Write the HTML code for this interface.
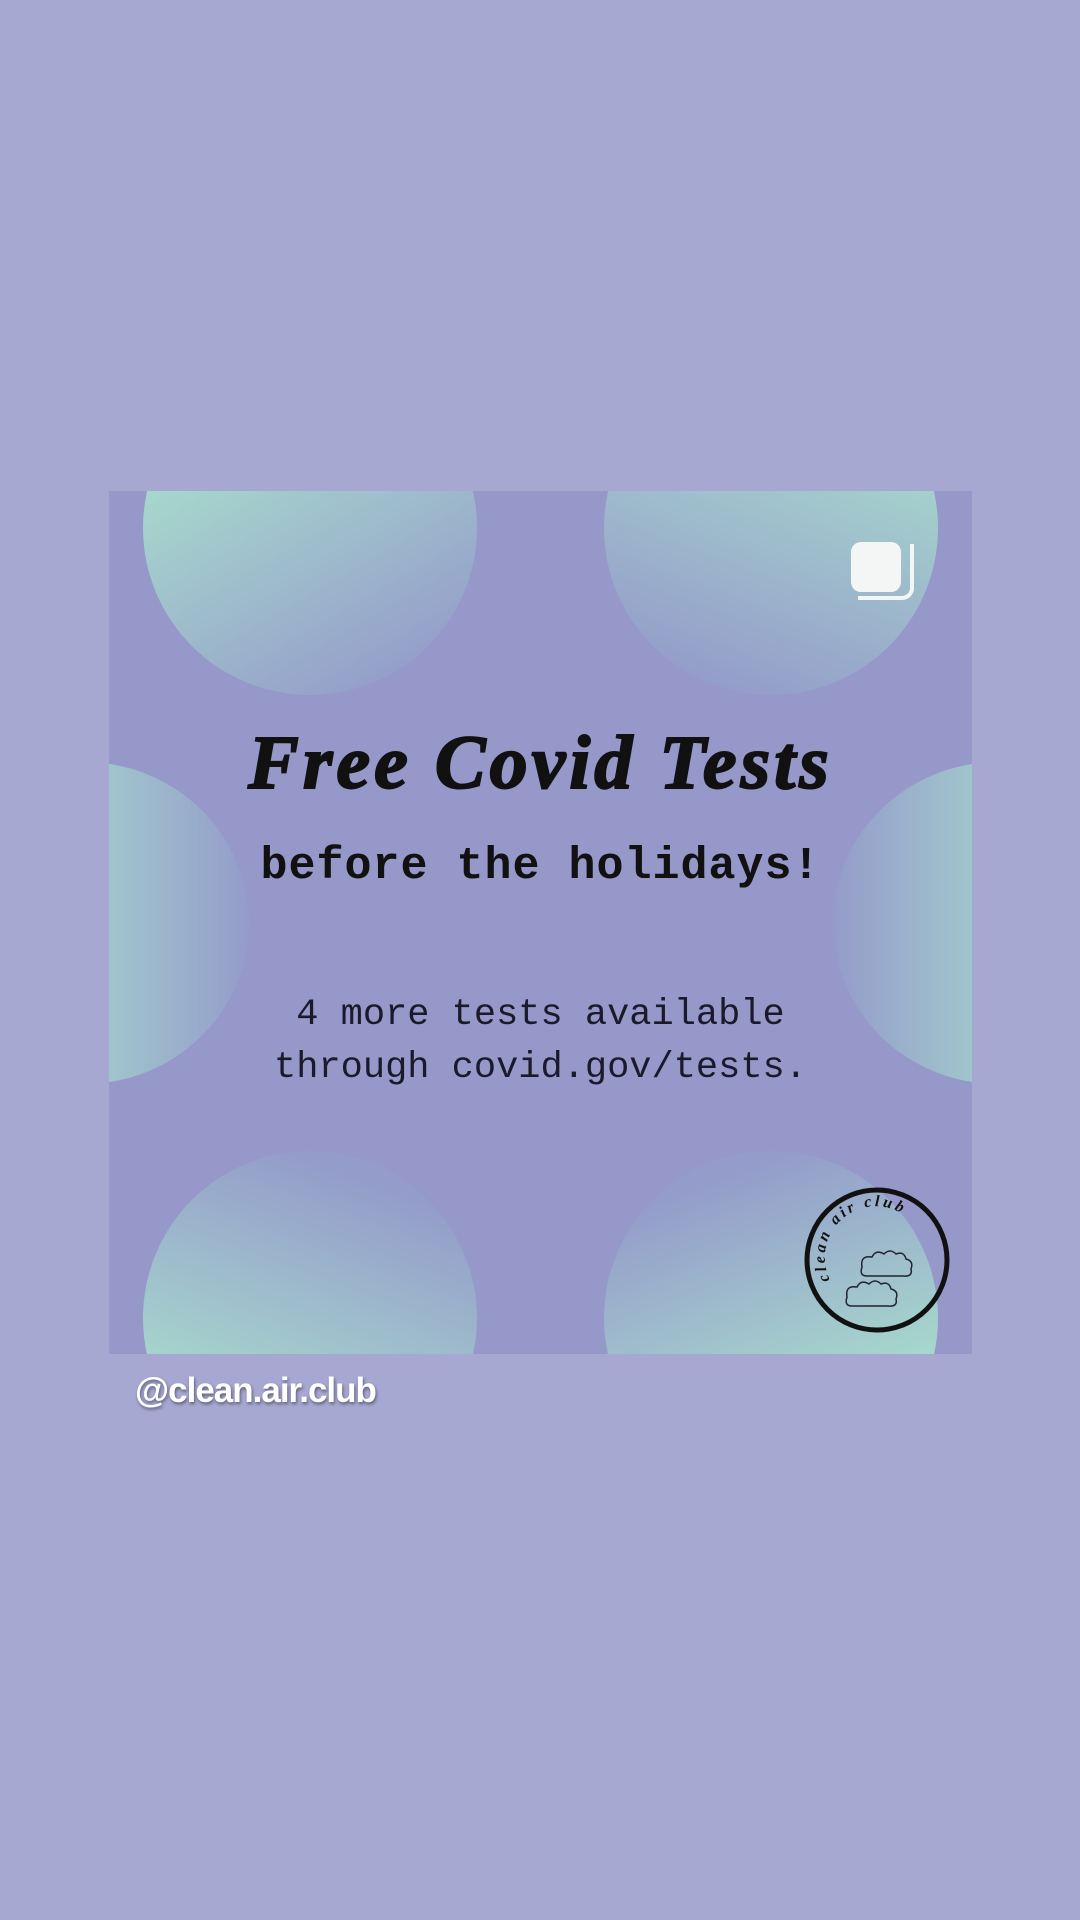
<!DOCTYPE html>
<html><head><style>
body{margin:0;width:1080px;height:1920px;background:#a6a8d2;position:relative;overflow:hidden;font-family:"Liberation Sans",sans-serif}
.card{position:absolute;left:109px;top:491px;width:863px;height:863px;background:#9598c9;overflow:hidden}
.c{position:absolute;border-radius:50%}
.t{position:absolute;left:0;width:863px;text-align:center;color:#111}
</style></head><body>
<div class="card">
 <div class="c" style="left:34px;top:-130px;width:334px;height:334px;background:linear-gradient(150deg,#a8dccd 20%,#949cca 90%)"></div>
 <div class="c" style="left:495px;top:-130px;width:334px;height:334px;background:linear-gradient(200deg,#a8dccd 15%,#949cca 90%)"></div>
 <div class="c" style="left:-190px;top:271px;width:330px;height:322px;background:linear-gradient(90deg,#a5d6cd 40%,#949cca 100%)"></div>
 <div class="c" style="left:724px;top:271px;width:330px;height:322px;background:linear-gradient(270deg,#a5d6cd 40%,#949cca 100%)"></div>
 <div class="c" style="left:34px;top:660px;width:334px;height:334px;background:linear-gradient(20deg,#a8dccd 20%,#949cca 85%)"></div>
 <div class="c" style="left:495px;top:660px;width:334px;height:334px;background:linear-gradient(-20deg,#a8dccd 25%,#949cca 85%)"></div>
 <div style="position:absolute;left:749px;top:53px;width:52px;height:52px;border:4px solid #f4f6f6;border-left:none;border-top:none;border-radius:0 0 12px 0"></div>
 <div style="position:absolute;left:742px;top:51px;width:50px;height:50px;background:#f4f6f6;border-radius:10px"></div>
 <div class="t" style="top:229px;font-family:'Liberation Serif',serif;font-weight:bold;font-style:italic;font-size:76px;letter-spacing:4px;-webkit-text-stroke:2px #111">Free Covid Tests</div>
 <div class="t" style="top:350px;font-family:'Liberation Mono',monospace;font-weight:bold;font-size:45px;letter-spacing:1px">before the holidays!</div>
 <div class="t" style="top:498px;font-family:'Liberation Mono',monospace;font-size:37px;line-height:53px;color:#1a1a2a">4 more tests available<br>through covid.gov/tests.</div>
 <svg style="position:absolute;left:693px;top:694px" width="150" height="150" viewBox="0 0 150 150">
  <circle cx="75" cy="75" r="70" fill="none" stroke="#111" stroke-width="5"/>
  <path id="arc" d="M28 95 A50 50 0 0 1 120 50" fill="none"/>
  <text font-family="Liberation Serif,serif" font-style="italic" font-weight="bold" font-size="16" fill="#111" letter-spacing="3"><textPath href="#arc">clean air club</textPath></text>
  <path d="M60 82 q-2-12 10-10 q4-8 12-3 q6-6 12 0 q8-3 10 5 q8 2 5 10 q2 8-8 7 l-36 0 q-8 0-5-9z" fill="none" stroke="#223" stroke-width="1.5"/>
  <path d="M45 112 q-2-12 10-10 q4-8 12-3 q6-6 12 0 q8-3 10 5 q8 2 5 10 q2 8-8 7 l-36 0 q-8 0-5-9z" fill="none" stroke="#223" stroke-width="1.5"/>
 </svg>
</div>
<div style="position:absolute;left:135px;top:1371px;font-size:35px;font-weight:bold;color:#fff;text-shadow:1px 2px 3px rgba(0,0,0,.45);letter-spacing:-1px">@clean.air.club</div>
</body></html>
